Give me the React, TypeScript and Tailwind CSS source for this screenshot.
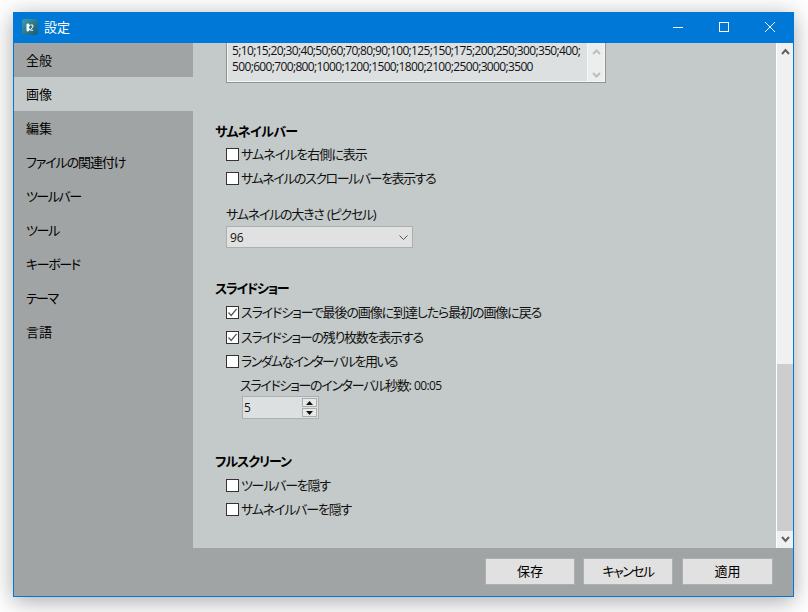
import React from 'react';

const fontStack = 'font-["Open_Sans","Noto_Sans_CJK_JP",sans-serif] [font-feature-settings:"palt"]';

const sideItems = [
  { label: '全般', cls: '' },
  { label: '画像', cls: 'bg-[#c4cac9]' },
  { label: '編集', cls: '' },
  { label: 'ファイルの関連付け', cls: 'tracking-[-1.1px]' },
  { label: 'ツールバー', cls: 'tracking-[-1.5px]' },
  { label: 'ツール', cls: 'tracking-[-1.3px]' },
  { label: 'キーボード', cls: 'tracking-[-1.4px]' },
  { label: 'テーマ', cls: 'tracking-[-1.6px]' },
  { label: '言語', cls: '' },
];

const Check = ({ label, checked, className, track }: { label: string; checked?: boolean; className?: string; track: string }) => (
  <div className={`flex h-6 items-center pl-[33px] ${className ?? ''}`}>
    <span className="flex h-[13px] w-[13px] shrink-0 items-center justify-center border border-[#333] bg-[#fff]">
      {checked && (
        <svg width="11" height="11" viewBox="0 0 11 11" fill="none" stroke="#555" strokeWidth="1.3">
          <path d="M1.5 5.5 L4.2 8.4 L9.6 1.8" />
        </svg>
      )}
    </span>
    <span className={`ml-[2px] text-[13px] leading-5 text-[#111] ${track}`}>{label}</span>
  </div>
);

const Heading = ({ children, className }: { children: React.ReactNode; className?: string }) => (
  <div className={`h-5 pl-[22px] text-[13px] font-bold leading-5 text-black ${className ?? ''}`}>{children}</div>
);

const FooterButton = ({ children, className }: { children: React.ReactNode; className?: string }) => (
  <button className={`h-[27px] border border-[#adb0b1] bg-[#e1e1e1] text-[13px] text-black ${className ?? ''}`}>{children}</button>
);

export default function App() {
  return (
    <div className={`h-[612px] w-[808px] overflow-hidden bg-white pl-[13px] pt-3 ${fontStack}`}>
      <div className="flex h-[585px] w-[781px] flex-col border border-[#0078d7] shadow-[0_4px_22px_rgba(0,0,0,0.35)]">
        {/* title bar */}
        <div className="flex h-[30px] shrink-0 items-center bg-[#0078d7] text-white">
          <svg className="ml-[8px] -mt-[2px]" width="16" height="16" viewBox="0 0 16 16">
            <defs>
              <linearGradient id="logo" x1="0" y1="0" x2="1" y2="1">
                <stop offset="0" stopColor="#3f9bab" />
                <stop offset="1" stopColor="#1c5a70" />
              </linearGradient>
            </defs>
            <rect width="16" height="16" rx="2.5" fill="url(#logo)" />
            <path d="M5 5h1.5v7H5z M6.5 8 L8 5.5 M6.5 8.5 L8 11.5" stroke="#fff" strokeWidth="1" fill="#fff" />
            <path d="M8.6 6 h2.2 v2 l-2.2 2.6 v0.6 h2.6" stroke="#fff" strokeWidth="1" fill="none" />
          </svg>
          <span className="ml-[6px] text-[13px]">設定</span>
          <div className="ml-auto flex h-full pb-[2px]">
            <div className="flex h-full w-[46px] items-center justify-center">
              <div className="h-px w-[10px] bg-white" />
            </div>
            <div className="flex h-full w-[46px] items-center justify-center">
              <div className="h-[10px] w-[10px] border border-white" />
            </div>
            <div className="flex h-full w-[46px] items-center justify-center">
              <svg width="10" height="10" viewBox="0 0 10 10" stroke="#fff" strokeWidth="1">
                <path d="M0 0 L10 10 M10 0 L0 10" />
              </svg>
            </div>
          </div>
        </div>

        <div className="flex min-h-0 flex-1 bg-[#c4cac9]">
          {/* sidebar */}
          <div className="w-[179px] shrink-0 bg-[#a0a4a5]">
            {sideItems.map((item) => (
              <div key={item.label} className={`flex h-[34px] items-center pl-3 pt-px text-[13px] text-black ${item.cls}`}>
                {item.label}
              </div>
            ))}
          </div>

          {/* content */}
          <div className="min-w-0 flex-1 text-[#111]">
            <div className="ml-[33px] h-10 w-[380px] border-x border-b border-[#8f9394]">
              <div className="flex h-full border-x border-b border-[#f4f5f5] bg-[#dde0e1]">
                <div className="min-w-0 flex-1 overflow-hidden whitespace-nowrap pl-1 text-[12px] leading-4 tracking-[-0.65px] text-[#111]">
                  5;10;15;20;30;40;50;60;70;80;90;100;125;150;175;200;250;300;350;400;
                  <br />
                  500;600;700;800;1000;1200;1500;1800;2100;2500;3000;3500
                </div>
                <div className="flex w-[17px] shrink-0 flex-col items-center justify-between border-l border-[#f4f5f5] bg-[#eceeee] pb-[3px] pt-[6px]">
                  <svg width="9" height="6" viewBox="0 0 9 6" fill="none" stroke="#bcbfc0" strokeWidth="2">
                    <path d="M1 5 L4.5 1.5 L8 5" />
                  </svg>
                  <svg width="9" height="6" viewBox="0 0 9 6" fill="none" stroke="#bcbfc0" strokeWidth="2">
                    <path d="M1 1 L4.5 4.5 L8 1" />
                  </svg>
                </div>
              </div>
            </div>

            <Heading className="mt-[38px] tracking-[-0.6px]">サムネイルバー</Heading>
            <Check className="mt-px" track="tracking-[-1px]" label="サムネイルを右側に表示" />
            <Check track="tracking-[-1.45px]" label="サムネイルのスクロールバーを表示する" />
            <div className="ml-[33px] mt-[14px] h-5 text-[13px] leading-5 tracking-[-1.25px]">
              サムネイルの大きさ<span className="tracking-normal"> </span>(ピクセル)
            </div>
            <div className="ml-[33px] mt-[2px] flex h-[22px] w-[187px] items-center justify-between border border-[#adb0b1] bg-[#e1e1e1] pl-[3px] pr-1 text-[12px]">
              <span className="pt-px">96</span>
              <svg width="9" height="5" viewBox="0 0 9 5" fill="none" stroke="#555" strokeWidth="1">
                <path d="M0.5 0.5 L4.5 4.5 L8.5 0.5" />
              </svg>
            </div>

            <Heading className="mt-[30px] tracking-[-1.3px]">スライドショー</Heading>
            <Check className="mt-[2px]" checked track="tracking-[-1.1px]" label="スライドショーで最後の画像に到達したら最初の画像に戻る" />
            <Check className="mt-px" checked track="tracking-[-1.25px]" label="スライドショーの残り枚数を表示する" />
            <Check track="tracking-[-1.6px]" label="ランダムなインターバルを用いる" />
            <div className="ml-[47px] mt-[2px] h-5 text-[13px] leading-5 tracking-[-1.3px]">
              スライドショーのインターバル秒数:<span className="tracking-normal"> </span>
              <span className="text-[12px] tracking-[-0.6px]">00:05</span>
            </div>
            <div className="ml-[49px] mt-px flex h-[23px] w-[77px] border border-[#adb0b1] bg-[#dde0e1]">
              <span className="flex-1 pl-px text-[12px] leading-[21px]">5</span>
              <div className="flex w-[16px] flex-col gap-px py-px pr-px">
                <div className="flex flex-1 items-center justify-center border border-[#a9adad] bg-[#e8e8e8]">
                  <svg width="7" height="4" viewBox="0 0 7 4" fill="#111"><path d="M3.5 0 L7 4 H0 Z" /></svg>
                </div>
                <div className="flex flex-1 items-center justify-center border border-[#a9adad] bg-[#e8e8e8]">
                  <svg width="7" height="4" viewBox="0 0 7 4" fill="#111"><path d="M0 0 H7 L3.5 4 Z" /></svg>
                </div>
              </div>
            </div>

            <Heading className="mt-8 tracking-[-1px]">フルスクリーン</Heading>
            <Check className="mt-[2px]" track="tracking-[-1.25px]" label="ツールバーを隠す" />
            <Check track="tracking-[-1.2px]" label="サムネイルバーを隠す" />
          </div>

          {/* scrollbar */}
          <div className="flex w-[17px] shrink-0 flex-col border-l border-white bg-[#f0f0f0]">
            <div className="flex h-[17px] items-center justify-center">
              <svg width="9" height="7" viewBox="0 0 9 7" fill="none" stroke="#606060" strokeWidth="2">
                <path d="M1 6 L4.5 2 L8 6" />
              </svg>
            </div>
            <div className="mt-[304px] w-full flex-1 bg-[#cdcdcd]" />
            <div className="flex h-[17px] items-center justify-center">
              <svg width="9" height="7" viewBox="0 0 9 7" fill="none" stroke="#606060" strokeWidth="2">
                <path d="M1 1 L4.5 5 L8 1" />
              </svg>
            </div>
          </div>
        </div>

        {/* footer */}
        <div className="flex h-12 shrink-0 items-start justify-end bg-[#a0a4a5] pr-5 pt-[10px]">
          <FooterButton className="w-[90px]">保存</FooterButton>
          <FooterButton className="ml-2 w-[90px] tracking-[-1.6px]">キャンセル</FooterButton>
          <FooterButton className="ml-[9px] w-[91px]">適用</FooterButton>
        </div>
      </div>
    </div>
  );
}
